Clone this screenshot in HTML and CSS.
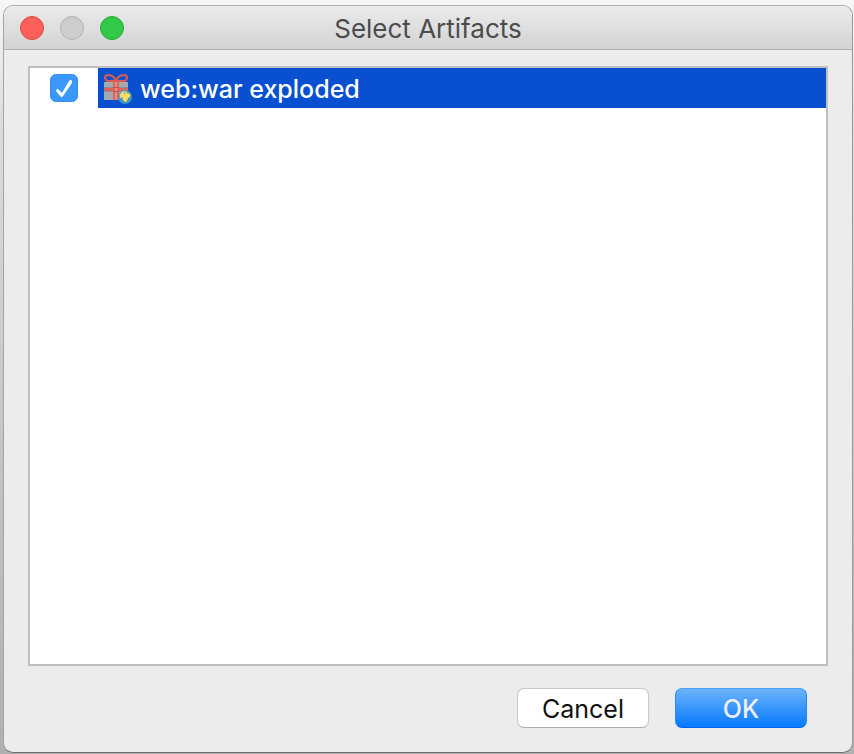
FILE: index.html
```html
<!DOCTYPE html>
<html lang="en">
<head>
<meta charset="utf-8">
<title>Select Artifacts</title>
<link rel="stylesheet" href="styles.css">
</head>
<body>
<main class="window">
  <header class="titlebar">
    <div class="lights">
      <button class="light close" type="button" aria-label="Close"></button>
      <button class="light minimize" type="button" aria-label="Minimize" disabled></button>
      <button class="light maximize" type="button" aria-label="Zoom"></button>
    </div>
    <h1 class="title">Select Artifacts</h1>
  </header>
  <form class="content">
    <ul class="list">
      <li class="row">
        <span class="check-cell"><input class="check" type="checkbox" id="artifact" checked></span>
        <label class="item" for="artifact">
          <svg class="icon" viewBox="0 0 32 32" aria-hidden="true">
            <path fill="#a5a9ad" d="M2 10h24v18H2z"/>
            <path fill="#8b8f99" d="M2 15h24v1H2zM2 19h24v1H2z"/>
            <path fill="#d9655c" d="M2 16h24v3H2zM11 9h6v19h-6z"/>
            <path fill="#eb8b80" d="M13 10h2v18h-2z"/>
            <path fill="#bd4f55" d="M11 15h6v1h-6zM11 19h6v1h-6z"/>
            <g fill="none" stroke="#dc5b53" stroke-width="2">
              <path d="M14 8C12 5 9 3 6 3 2 3 2 8 6 9c3 0 6 0 8-1z"/>
              <path d="M14 8c2-3 5-5 8-5 4 0 4 5 0 6-3 0-6 0-8-1z"/>
            </g>
            <circle cx="23" cy="25" r="7" fill="#4796bd"/>
            <circle cx="21" cy="23" r="4" fill="#65add0"/>
            <path fill="#ffdc62" d="m18 23 2-3 4-1 1 2 3 1v3l-2 1-1 3-2 1-2-2v-3l-3 1z"/>
            <path fill="#4796bd" d="m22 20 2 1-2 1z"/>
          </svg>
          <span class="label">web:war exploded</span>
        </label>
      </li>
    </ul>
    <footer class="actions">
      <button class="button" type="button">Cancel</button>
      <button class="button primary" type="submit">OK</button>
    </footer>
  </form>
</main>
</body>
</html>
```
FILE: styles.css
```css
* { box-sizing: border-box; }

body {
  display: flex;
  min-height: 100vh;
  margin: 0;
  padding: 5px 1px 1px 3px;
  background: linear-gradient(#f7f7f7, #dcdcdc 16%, #c4c4c4 60%, #b0b0b0);
  font: 25px/32px Inter, "Liberation Sans", sans-serif;
  color: #111;
}

.window {
  display: flex;
  flex: 1;
  flex-direction: column;
  overflow: hidden;
  border: 1px solid #b4b4b4;
  border-left-color: #a4a4a4;
  border-right-color: #999;
  border-bottom-color: #6c6c6c;
  border-radius: 10px;
  background: #ececec;
}

.titlebar {
  display: grid;
  grid-template-columns: 1fr auto 1fr;
  align-items: center;
  height: 44px;
  padding: 0 16px;
  border-bottom: 1px solid #b1b1b1;
  background: linear-gradient(#ebebeb, #d3d3d3);
}

.lights { display: flex; gap: 16px; }

.light {
  width: 24px;
  height: 24px;
  padding: 0;
  border: 1px solid #df4744;
  border-radius: 50%;
  background: #fc605b;
}

.minimize { border-color: #b3b3b3; background: #cdcdcd; }
.maximize { border-color: #27aa35; background: #34c84a; }

.title {
  margin: 0;
  padding-top: 2px;
  font-size: 26px;
  font-weight: 400;
  color: #4c4c4c;
}

.content {
  display: flex;
  flex: 1;
  flex-direction: column;
  padding: 16px 24px 24px;
}

.list {
  flex: 1;
  margin: 0;
  padding: 0;
  border: 2px solid #c0c0c0;
  background: #fff;
  list-style: none;
}

.row { display: flex; height: 40px; }

.check-cell {
  display: flex;
  align-items: center;
  padding: 0 20px;
}

.check {
  width: 28px;
  height: 28px;
  margin: 0;
  border: 1px solid #358df2;
  border-radius: 6px;
  appearance: none;
  background: #3b99fc;
}

.check:checked::before {
  display: block;
  width: 26px;
  height: 26px;
  background: #fff;
  clip-path: path("M5 16Q5 14 7 14L11 18 18 6Q20 4 21 6L21 8 12 21Q11 23 9 21Z");
  content: "";
}

.item {
  display: flex;
  flex: 1;
  align-items: center;
  gap: 6px;
  padding: 0 4px;
  background: #0850d0;
  color: #fff;
}

.label { padding-top: 2px; font-weight: 500; }

.icon { width: 32px; height: 32px; }

.actions {
  display: flex;
  justify-content: flex-end;
  gap: 26px;
  padding: 22px 21px 0;
}

.button {
  width: 132px;
  height: 40px;
  padding: 2px 0 0;
  border: 1px solid #c8c8c8;
  border-bottom-color: #adadad;
  border-radius: 7px;
  background: #fff;
  color: #111;
  font: inherit;
}

.primary {
  border-color: #4a9ff7 #2388f8 #0062f0;
  background: linear-gradient(#6cb3fa, #067aff);
  color: #f0f0f4;
  font-weight: 500;
}
```
